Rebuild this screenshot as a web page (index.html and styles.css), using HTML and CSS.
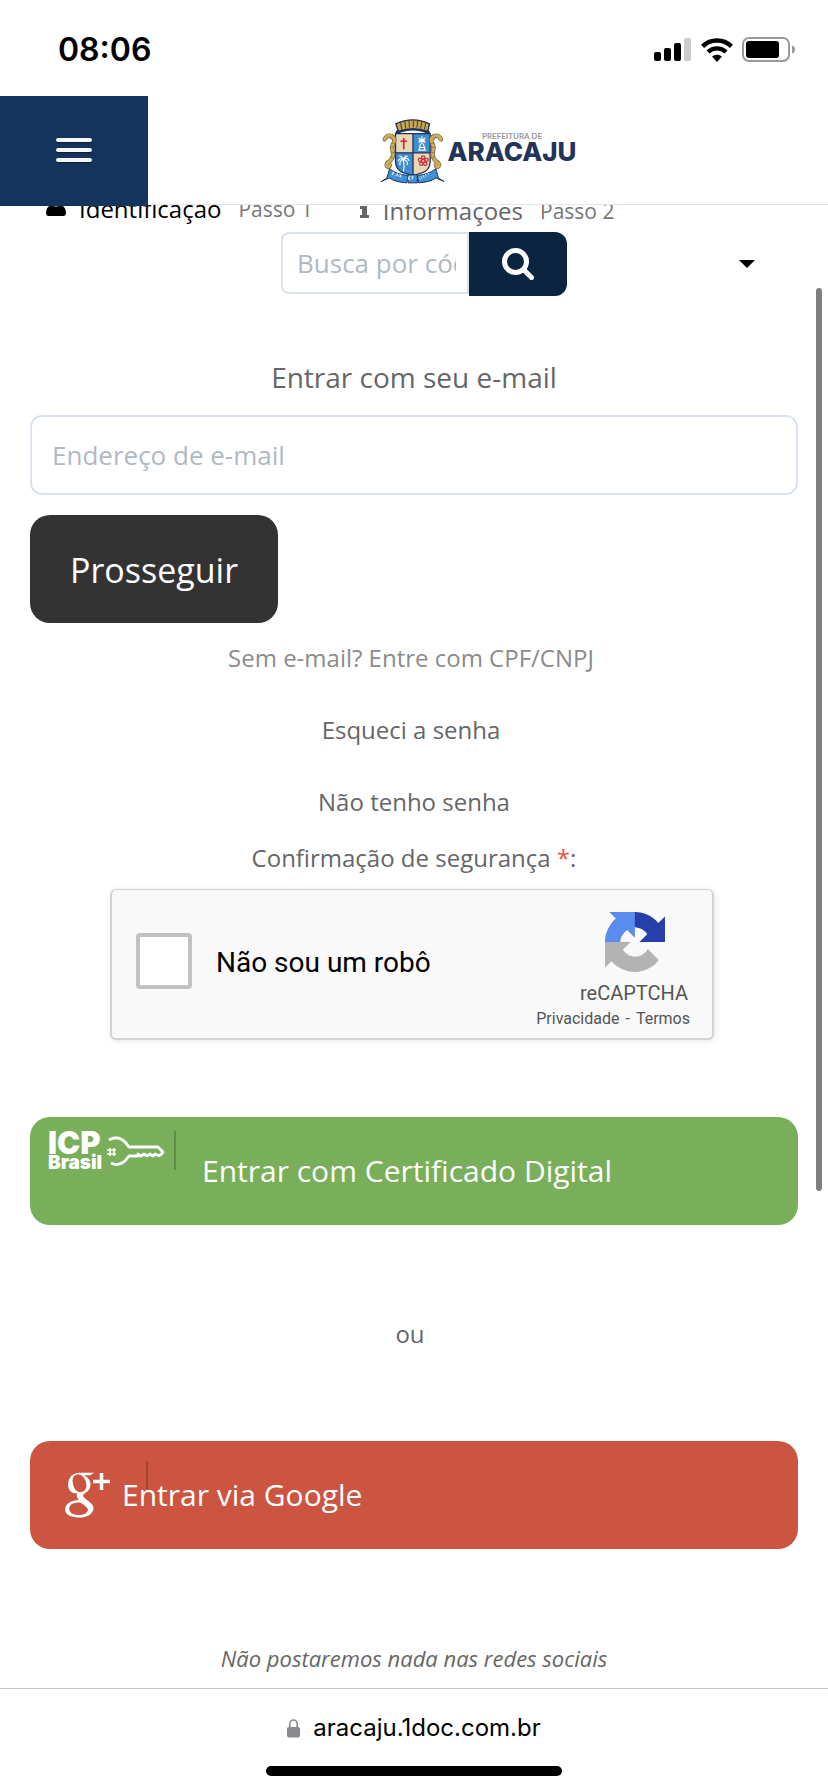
FILE: index.html
```html
<!DOCTYPE html>
<html lang="pt-BR">
<head>
<meta charset="utf-8">
<meta name="viewport" content="width=device-width">
<title>Prefeitura de Aracaju</title>
<link rel="stylesheet" href="styles.css">
</head>
<body>
<div class="status-bar">
  <span class="clock">08:06</span>
  <div class="status-icons">
    <svg width="38" height="24" viewBox="0 0 38 24" aria-hidden="true"><rect x="0" y="14" width="7" height="9" rx="2"/><rect x="10" y="10" width="7" height="13" rx="2"/><rect x="20" y="5" width="7" height="18" rx="2"/><rect x="30" y="0" width="7" height="23" rx="2" fill="#ccc"/></svg>
    <svg width="32" height="24" viewBox="0 0 32 24" aria-hidden="true"><g fill="none" stroke="#000" stroke-width="4.4"><path d="M1.6 8.4a20.6 20.6 0 0 1 28.8 0"/><path d="M7 14a13 13 0 0 1 18 0"/></g><path d="M11 18.6a7.4 7.4 0 0 1 10 0L16 24z"/></svg>
    <svg width="54" height="26" viewBox="0 0 54 26" aria-hidden="true"><rect x="1" y="1" width="46" height="23" rx="6" fill="none" stroke="#999" stroke-width="2"/><rect x="4" y="4" width="33" height="17" rx="3"/><path d="M50 8.500v8c4-1 4-7 0-8z" fill="#999"/></svg>
  </div>
</div>
<header class="header">
  <button class="menu" type="button" aria-label="Menu"><span class="bar"></span><span class="bar"></span><span class="bar"></span></button>
  <a class="brand" href="#">
    <svg class="crest" viewBox="30 40 200 196" aria-hidden="true">
      <path d="M78 84Q80 70 92 72H166Q178 70 180 84Q130 60 78 84z" fill="#8e2133" stroke="#20315f" stroke-width="4"/>
      <path d="M78 54Q129 30 180 54L174 77Q129 60 86 77z" fill="#c9a648" stroke="#20315f" stroke-width="4"/>
      <path d="M92 50l4 22M105 46l3 22M118 44l1 22M131 43v22M144 44l-2 22M157 47l-4 22M169 51l-5 21" stroke="#35395a" stroke-width="3"/>
      <path d="M77 84H182V170Q180 196 157 203Q139 206 130 216Q121 206 102 203Q79 196 77 170z" fill="#e8d8b7"/>
      <path d="M130 84h52v58h-52zM77 142h53v74Q121 206 102 203Q79 196 77 170z" fill="#3e8ecf"/>
      <path d="M77 84H182V170Q180 196 157 203Q139 206 130 216Q121 206 102 203Q79 196 77 170zM130 84v130M77 142h105" fill="none" stroke="#20315f" stroke-width="4"/>
      <path d="M102 97v34M92 107h20" stroke="#c6282f" stroke-width="5"/>
      <g stroke="#fff" stroke-width="3.500" fill="none"><path d="M157 92v24M147 97l20 14M167 97l-20 14M153 114l-5 20h19l-6-20M151 126h13M147 104h20"/><path d="M101 164q4 16 0 34M101 163q-12-8-16 5M101 163q10-11 17 3M101 163q-14 2-10 17M101 163q14 1 12 16M101 163q-8-15-13-10M101 163q4-14 13-10"/></g>
      <g fill="none" stroke="#ce3740" stroke-width="4"><circle cx="161" cy="166" r="5"/><circle cx="161" cy="156" r="5"/><circle cx="151" cy="163" r="5"/><circle cx="171" cy="163" r="5"/><circle cx="155" cy="175" r="5"/><circle cx="167" cy="175" r="5"/></g>
      <g id="horse" stroke-linecap="round" fill="none"><path d="M44 101q8-15 21-10q13 7 6 22q-7 11-3 22q6 20-9 33q-13 8-8 14q7 6 9-3" stroke="#6d6145" stroke-width="13"/><path d="M44 101q8-15 21-10q13 7 6 22q-7 11-3 22q6 20-9 33q-13 8-8 14q7 6 9-3" stroke="#d1ad55" stroke-width="9"/><path d="M60 94l4 8M66 112l9 2M64 126l9-2M65 140l9 2M61 154l9 4" stroke="#75633a" stroke-width="2"/></g>
      <use href="#horse" transform="translate(259 0) scale(-1 1)"/>
      <g fill="#3e91d2" stroke="#20315f" stroke-width="3"><path d="M34 229l17-11 8-28q22 19 56 20l-4 23q-34-2-53-15z"/><path d="M224 229l-17-11-8-28q-22 19-56 20l4 23q34-2 53-15z"/><path d="M115 208h28v25h-28z"/></g>
      <path d="M69 201l-2 9m2-9q7 2 0 5m8 7l6-8 2 9m4 0l7-6m-6-1l4 10m28-2h-6v8h6m-6-4h4m5-4h7m-4 0v8m20-5l5 5m0-10l5 7m2-11l4 8m3-11l4 8m2-12l6 5" fill="none" stroke="#fff" stroke-width="2.500"/>
    </svg>
    <span class="brand-text"><span class="brand-sup">PREFEITURA DE</span><span class="brand-name">ARACAJU</span></span>
  </a>
</header>
<main class="content">
  <ol class="steps">
    <li class="step step-active"><svg width="20" height="20" viewBox="0 0 20 20" aria-hidden="true"><circle cx="10" cy="5" r="5"/><path d="M0 20v-3q0-6 5-8q5 3 10 0q5 2 5 8q0 3-3 3H3q-3 0-3-3z"/></svg><span>Identificação</span><small>Passo 1</small></li>
    <li class="step"><svg width="10" height="20" viewBox="0 0 10 20" aria-hidden="true"><path d="M2 0h5v5H2zM0 8h7v9h2v3H0v-3h2v-6H0z"/></svg><span>Informações</span><small>Passo 2</small></li>
  </ol>
  <div class="tools">
    <form class="search">
      <input class="search-input" type="text" placeholder="Busca por código" aria-label="Busca por código">
      <button class="search-button" type="button" aria-label="Buscar"><svg width="32" height="32" viewBox="0 0 32 32" fill="none" stroke="#fff" aria-hidden="true"><circle cx="13.500" cy="13.500" r="11" stroke-width="5"/><path d="M22 22l7.500 7.500" stroke-width="5" stroke-linecap="round"/></svg></button>
    </form>
    <button class="caret" type="button" aria-label="Abrir opções"><svg width="16" height="8" viewBox="0 0 16 8" aria-hidden="true"><path d="M0 0h16L8 8z"/></svg></button>
  </div>
  <form class="login">
    <label class="login-title" for="email">Entrar com seu e-mail</label>
    <input class="email" id="email" type="email" placeholder="Endereço de e-mail">
    <button class="submit" type="button">Prosseguir</button>
    <nav class="links">
      <a class="link link-muted" href="#">Sem e-mail? Entre com CPF/CNPJ</a>
      <a class="link" href="#">Esqueci a senha</a>
      <a class="link" href="#">Não tenho senha</a>
    </nav>
    <p class="confirm">Confirmação de segurança <span class="required">*</span>:</p>
    <div class="captcha">
      <label class="captcha-check"><input class="checkbox" type="checkbox"><span class="captcha-text">Não sou um robô</span></label>
      <div class="captcha-brand">
        <svg class="captcha-logo" viewBox="0 0 64 64" aria-hidden="true"><path d="M64 31.955l-.033-1.370V4.687l-7.160 7.160C50.948 4.674 42.033.093 32.050.093c-10.400 0-19.622 4.960-25.458 12.640l11.736 11.860a15.550 15.550 0 0 1 4.754-5.334c2.050-1.600 4.952-2.906 8.968-2.906.485 0 .860.057 1.135.163 4.976.393 9.288 3.140 11.828 7.124l-8.307 8.307L64 31.953" fill="#273fa8"/><path d="M31.862.094l-1.370.033H4.594l7.160 7.160C4.580 13.147 0 22.060 0 32.046c0 10.400 4.960 19.622 12.640 25.458L24.500 45.768a15.550 15.550 0 0 1-5.334-4.754c-1.600-2.050-2.906-4.952-2.906-8.968 0-.485.057-.860.163-1.135.393-4.976 3.140-9.288 7.124-11.828l8.307 8.307L31.860.095" fill="#5a8bee"/><path d="M.001 32.045l.033 1.370v25.898l7.160-7.160c5.860 7.173 14.774 11.754 24.760 11.754 10.400 0 19.622-4.960 25.458-12.640l-11.736-11.860a15.550 15.550 0 0 1-4.754 5.334c-2.050 1.600-4.952 2.906-8.968 2.906-.485 0-.860-.057-1.135-.163-4.976-.393-9.288-3.140-11.828-7.124l8.307-8.307c-10.522.040-22.400.066-27.295-.005" fill="#b3b3b3"/></svg>
        <span class="captcha-name">reCAPTCHA</span>
        <span class="captcha-terms"><a href="#">Privacidade</a><span>-</span><a href="#">Termos</a></span>
      </div>
    </div>
    <button class="provider provider-icp" type="button">
      <span class="icp-logo"><span class="icp-words"><span class="icp-top">ICP</span><span class="icp-bottom">Brasil</span></span>
        <svg width="58" height="32" viewBox="0 0 58 32" fill="none" stroke="#fff" stroke-width="2.800" stroke-linejoin="round" aria-hidden="true"><path d="M2 5Q13-2 22 12h29l5 5q-3 5-6 3l-2-1-2 2-3-2-3 2-3-2-3 2-3-2v2H22Q14 33 4 28"/><path d="M0 15h9M0 19h9M3 13v8M7 13v8" stroke-width="1.600"/></svg>
      </span>
      <span class="provider-label">Entrar com Certificado Digital</span>
    </button>
    <p class="or">ou</p>
    <button class="provider provider-google" type="button">
      <svg class="gplus" width="46" height="46" viewBox="0 0 46 46" fill="none" stroke="#fff" aria-hidden="true"><path d="M14 .8h15L25.500 3.200H19q6.500 3 6.500 9.500q0 5-5 8q-4 2.300-1.500 4.800l4.500 3.700q9 6.300 2 13Q19 47 9 45Q0 43.500 0 37.500Q.5 29 14 28q-3-2-2-6.500Q3 21.500 3 12.500Q3.800 1.500 14 .8zM13 2.300Q7 3.500 7.600 9.500Q8.600 18.500 14 20q7 1 7.500-6.500Q20.500 3 13 2.300zM15 30.500Q5 30 4 36.500Q4 42.700 13.500 43Q22 43 23 38Q23 35 15 30.500z" fill="#fff" fill-rule="evenodd" stroke="none"/><path d="M28 9.500h17M36.500 1v17" stroke-width="3.500"/></svg>
      <span class="provider-label">Entrar via Google</span>
    </button>
    <p class="note">Não postaremos nada nas redes sociais</p>
  </form>
</main>
<footer class="browser-bar">
  <div class="address"><svg width="14" height="19" viewBox="0 0 14 19" aria-hidden="true"><rect x="0" y="8" width="13" height="10.500" rx="2" fill="#8a8a8e"/><path d="M2.800 9V5a3.700 4 0 0 1 7.400 0v4" fill="none" stroke="#8a8a8e" stroke-width="1.600"/></svg><span>aracaju.1doc.com.br</span></div>
  <div class="home-indicator"></div>
</footer>
<div class="scroll-thumb"></div>
</body>
</html>
```
FILE: styles.css
```css
* { box-sizing: border-box; }
body {
  margin: 0;
  min-height: 100vh;
  display: flex;
  flex-direction: column;
  position: relative;
  background: #fff;
  color: #666;
  font-family: "Open Sans", sans-serif;
  font-size: 24px;
  line-height: 32px;
}
button { border: 0; padding: 0; font: inherit; cursor: pointer; }
a { color: inherit; text-decoration: none; }
p, ol { margin: 0; padding: 0; }

.status-bar {
  height: 96px;
  padding: 4px 32px 0 58px;
  display: flex;
  align-items: center;
  justify-content: space-between;
}
.clock { font: 600 32px/40px Inter, sans-serif; color: #000; }
.status-icons { display: flex; align-items: center; gap: 9px; }

.header {
  position: relative;
  z-index: 2;
  height: 109px;
  display: flex;
  background: #fff;
  border-bottom: 1px solid #e4e4e4;
}
.menu {
  width: 148px;
  height: 110px;
  padding-bottom: 2px;
  display: flex;
  flex-direction: column;
  align-items: center;
  justify-content: center;
  gap: 6px;
  background: #14335d;
}
.bar { width: 36px; height: 4px; border-radius: 2px; background: #f4f6f8; box-shadow: 0 1px 1px #0a1d38; }
.brand { flex: 1; padding: 23px 20px 0 0; display: flex; justify-content: center; align-items: flex-start; gap: 2px; }
.crest { width: 66px; height: 65px; }
.brand-text { display: flex; flex-direction: column; align-items: center; padding-top: 13px; }
.brand-sup { font: 700 8px/8px Lato, sans-serif; color: #999; }
.brand-name { font: 800 26px/24px Inter, sans-serif; color: #243459; }

.content { padding: 0 30px; }
.steps { margin-top: -12px; padding-left: 16px; display: flex; align-items: flex-start; gap: 47px; list-style: none; }
.step { display: flex; align-items: center; gap: 13px; line-height: 36px; }
.step small { font-size: 21px; padding-left: 4px; color: #777; }
.step svg { fill: currentColor; margin-bottom: 6px; }
.step-active { color: #000; line-height: 32px; }

.tools { margin-top: 3px; padding: 0 43px 0 251px; display: flex; align-items: center; justify-content: space-between; }
.search { display: flex; width: 286px; }
.search-input {
  width: 188px;
  height: 62px;
  padding: 0 11px 0 14px;
  border: 2px solid #dde3ee;
  border-radius: 8px 0 0 8px;
  background: #fff;
  font: 26px/32px "Open Sans", sans-serif;
}
input::placeholder { color: #b0b8c4; opacity: 1; }
.search-button {
  flex: 1;
  height: 64px;
  display: grid;
  place-items: center;
  border-radius: 0 12px 12px 0;
  background: #0b243f;
}
.caret { width: 16px; height: 32px; display: grid; place-items: center; background: none; }

.login { display: flex; flex-direction: column; padding-top: 63px; }
.login-title { text-align: center; font-size: 28px; line-height: 36px; }
.email {
  width: 100%;
  height: 80px;
  margin-top: 20px;
  padding: 0 20px;
  border: 2px solid #dde3ee;
  border-radius: 12px;
  background: #fff;
  font: 26px/32px "Open Sans", sans-serif;
}
.submit {
  align-self: flex-start;
  height: 108px;
  margin-top: 20px;
  padding: 2px 40px 0;
  border-radius: 20px;
  background: #333;
  color: #fff;
  font-size: 34px;
}
.links { margin-top: 19px; display: flex; flex-direction: column; align-items: center; gap: 40px; }
.link { padding-right: 6px; }
.link:last-child { padding-right: 0; }
.link-muted { color: #8b8b8b; }
.confirm { margin-top: 24px; text-align: center; }
.required { color: #df5645; }

.captcha {
  width: 604px;
  max-width: 100%;
  height: 151px;
  margin: 15px 0 0 80px;
  padding: 0 22px 0 24px;
  display: flex;
  justify-content: space-between;
  border: 2px solid #d3d3d3;
  border-top-width: 1px;
  border-radius: 6px;
  background: #f9f9f9;
  box-shadow: 1px 1px 6px rgba(0, 0, 0, 0.1);
  font-family: Roboto, sans-serif;
}
.captcha-check { display: flex; align-items: center; gap: 24px; padding-bottom: 6px; color: #000; font-size: 28px; }
.captcha-text { padding-top: 4px; }
.checkbox { appearance: none; width: 56px; height: 56px; margin: 0; border: 4px solid #c1c1c1; border-radius: 4px; background: #fff; }
.captcha-brand { padding-top: 22px; display: flex; flex-direction: column; align-items: flex-end; color: #555; }
.captcha-logo { width: 60px; height: 60px; margin-right: 25px; }
.captcha-name { margin: 9px 2px 0 0; font-size: 20px; line-height: 24px; }
.captcha-terms { display: flex; gap: 6px; font-size: 16px; line-height: 28px; }

.provider {
  position: relative;
  width: 100%;
  height: 108px;
  display: flex;
  align-items: center;
  border-radius: 20px;
  color: #fff;
  font-size: 30px;
}
.provider::before { content: ""; position: absolute; width: 2px; background: rgba(0, 0, 0, 0.2); }
.provider-label { position: relative; }
.provider-icp { margin-top: 77px; padding-left: 18px; gap: 37px; background: #79af5a; }
.provider-icp::before { left: 144px; top: 14px; height: 39px; }
.icp-logo { align-self: flex-start; display: flex; gap: 4px; padding-top: 14px; }
.icp-logo svg { margin-top: 4px; }
.icp-words { width: 55px; display: flex; flex-direction: column; align-items: flex-start; font-family: Inter, sans-serif; }
.icp-top { font-size: 31px; font-weight: 900; line-height: 23px; }
.icp-bottom { font-size: 19px; font-weight: 900; line-height: 17px; }
.or { margin-top: 93px; padding-right: 8px; text-align: center; }
.provider-google { margin-top: 91px; padding-left: 35px; gap: 11px; background: #cc5541; }
.provider-google::before { left: 116px; top: 20px; height: 28px; }
.note { margin-top: 93px; text-align: center; font-size: 22px; font-style: italic; }

.browser-bar { margin-top: auto; height: 104px; padding-top: 23px; border-top: 1px solid #c6c6c8; display: flex; flex-direction: column; align-items: center; }
.address { display: flex; align-items: center; gap: 12px; font: 24px/32px Inter, sans-serif; color: #000; }
.home-indicator { width: 296px; height: 10px; margin-top: 22px; border-radius: 5px; background: #000; }
.scroll-thumb { position: absolute; z-index: 3; right: 6px; top: 288px; width: 6px; height: 903px; border-radius: 3px; background: #7f7f7f; }
```
